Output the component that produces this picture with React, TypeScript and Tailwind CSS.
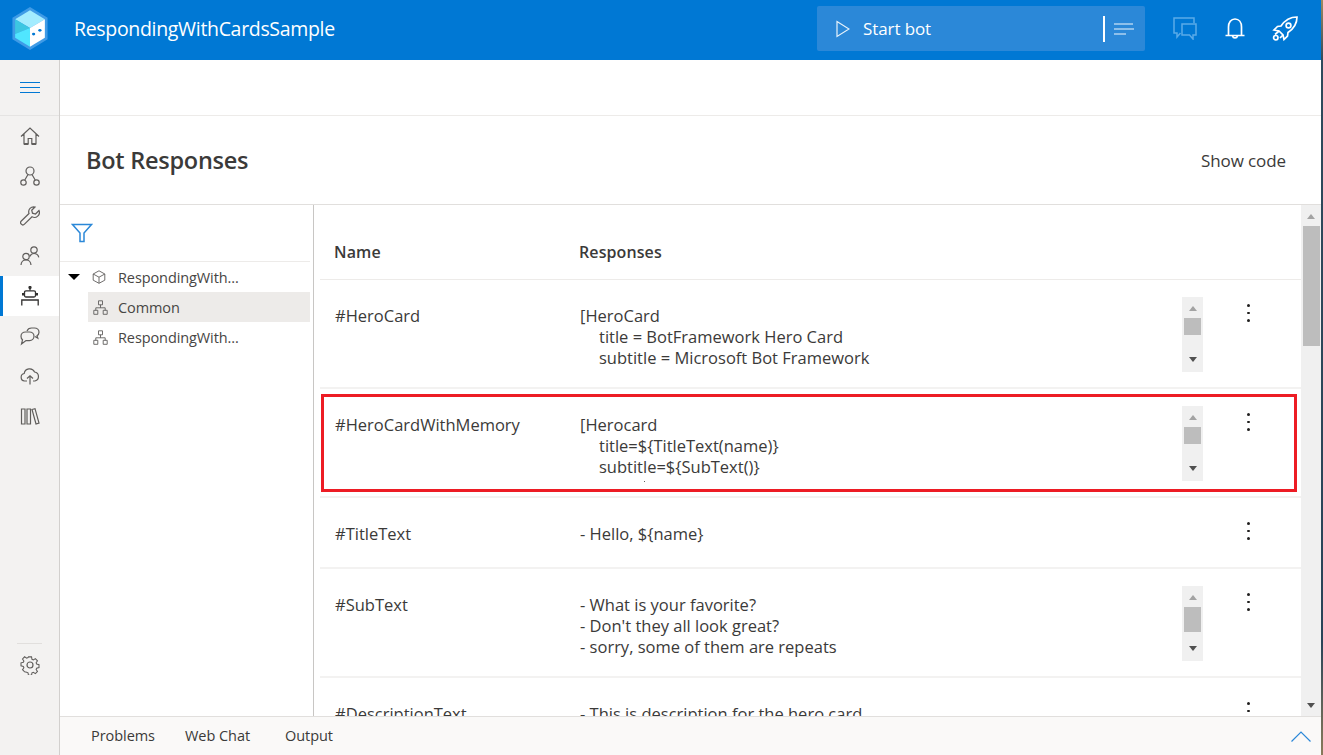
import type { ReactNode } from "react";

const navIcon = "fill-none stroke-[#605e5c] stroke-[1.2]";

function NavHome() {
  return (
    <svg width="20" height="20" viewBox="0 0 20 20" className={navIcon}>
      <path d="M1 10.500 10 2l9 8.500M4 8v10h4.200v-5.500h3.600V18H16V8" />
      <path d="M4 18h4.200M11.800 18H16" strokeWidth="2" />
    </svg>
  );
}
function NavDialog() {
  return (
    <svg width="20" height="20" viewBox="0 0 20 20" className={navIcon}>
      <circle cx="10" cy="5" r="4" />
      <circle cx="3.500" cy="16.500" r="2.700" />
      <circle cx="16.500" cy="16.500" r="2.700" />
      <path d="M8 8.500 4.800 14M12 8.500l3.200 5.500" />
    </svg>
  );
}
function NavWrench() {
  return (
    <svg width="20" height="20" viewBox="0 0 20 20" className={navIcon}>
      <path d="M19 4.500 15.500 8l-3-.8-.8-3L15 1a5 5 0 0 0-6 6.500L1.300 15a2.200 2.200 0 0 0 3.200 3.200L12 10.800A5 5 0 0 0 19 4.500Z" />
    </svg>
  );
}
function NavUsers() {
  return (
    <svg width="20" height="20" viewBox="0 0 20 20" className={navIcon}>
      <circle cx="14" cy="4" r="3.200" />
      <circle cx="6" cy="10.500" r="3.200" />
      <path d="M9.800 10.500c.8-2 2.300-3 4.200-3 2.500 0 4.200 1.500 4.800 3.800M1 19c.2-3 2.200-5 5-5s4.800 2 5 5" />
    </svg>
  );
}
function NavBot() {
  return (
    <svg width="20" height="20" viewBox="0 0 20 20" fill="none" stroke="#323130" strokeWidth="1.300">
      <circle cx="10" cy="1.500" r="1" fill="#323130" />
      <path d="M10 2.500v2" />
      <rect x="4.500" y="4.800" width="11" height="6.200" rx="1.500" />
      <path d="M3 7v2.500M17 7v2.500" strokeWidth="2" />
      <path d="M7.500 7.800h.01M12.500 7.800h.01" strokeWidth="2.200" />
      <path d="M1.800 19.500v-5.500h16.400v5.500" />
    </svg>
  );
}
function NavChat() {
  return (
    <svg width="20" height="20" viewBox="0 0 20 20" className={navIcon}>
      <path d="M7 5c.7-2 2.400-3 4.500-3h3C17 2 19 3.900 19 6.200c0 1.600-.8 2.800-2 3.600l.8 2.400-2.800-1.700" />
      <path d="M5.500 6h4C12 6 14 8 14 10.300s-2 4.300-4.500 4.300H6L1.500 18l1-4.200C1.500 13 1 11.700 1 10.300 1 8 3 6 5.500 6Z" />
    </svg>
  );
}
function NavCloud() {
  return (
    <svg width="20" height="20" viewBox="0 0 20 20" className={navIcon}>
      <path d="M7 15H4.500a3.800 3.800 0 0 1-.3-7.500A5.500 5.500 0 0 1 14.600 6 4.600 4.600 0 0 1 15 15h-2" />
      <path d="M10 18.500V10M7 12.500 10 9.800l3 2.700" />
    </svg>
  );
}
function NavBooks() {
  return (
    <svg width="20" height="20" viewBox="0 0 20 20" className={navIcon}>
      <path d="M1.500 3h3.500v15H1.500zM7 3h3.500v15H7zM12 3.500l3-.8 4 14.500-3 .8z" />
    </svg>
  );
}
function NavGear() {
  return (
    <svg width="20" height="20" viewBox="0 0 20 20" className={navIcon}>
      <circle cx="10" cy="10" r="3" />
      <path d="M8.300 1h3.400l.5 2.700 1.500.7 2.300-1.500 2.300 2.400-1.500 2.200.6 1.500 2.600.6v3.300l-2.600.6-.6 1.500 1.500 2.200-2.300 2.400-2.300-1.500-1.500.6-.5 2.700H8.300l-.5-2.700-1.500-.6L4 17.600l-2.300-2.400 1.500-2.200-.6-1.500L0 10.900V7.600l2.600-.6.600-1.500L1.700 3.300 4 .9l2.300 1.500 1.500-.7z" transform="translate(1 1) scale(.9)" />
    </svg>
  );
}

function Logo() {
  return (
    <svg width="36" height="43" viewBox="0 0 40 46" preserveAspectRatio="none">
      <path d="M20 0 39.500 11.500v23L20 46 .5 34.500v-23Z" fill="#3f9be6" />
      <path d="M20 3.500 36.500 13 20 22.500 3.500 13Z" fill="#a3ecff" />
      <path d="M3.500 13 20 22.500 3.500 29Z" fill="#3cc6e2" />
      <path d="M3.500 29 20 22.500V42.500L3.500 33Z" fill="#50e6ff" />
      <path d="M20 22.500 36.500 13v20L20 42.500Z" fill="#fff" />
      <ellipse cx="24" cy="29" rx="1.800" ry="1.400" fill="#0078d4" />
      <ellipse cx="31" cy="25" rx="1.800" ry="1.400" fill="#0078d4" />
    </svg>
  );
}

function Cube() {
  return (
    <svg width="14" height="14" viewBox="0 0 14 14" fill="none" stroke="#605e5c" strokeWidth="0.900">
      <path d="M7 .8 12.800 4v6.200L7 13.300 1.200 10.200V4ZM1.200 4 7 7.200 12.800 4M7 7.200v6" />
    </svg>
  );
}
function Tree() {
  return (
    <svg width="15" height="15" viewBox="0 0 15 15" fill="none" stroke="#605e5c" strokeWidth="0.900">
      <path d="M5.500.8h4v4h-4zM.8 10.300h4v4h-4zM10.200 10.300h4v4h-4zM7.500 4.800v3M2.800 10.300V7.800h9.400v2.500" />
    </svg>
  );
}

function TinyScrollbar({ tall }: { tall?: boolean }) {
  return (
    <div className="flex h-[75px] w-[21px] flex-col items-center bg-[#f0f0f0]">
      <div className="mt-[9px] h-0 w-0 border-x-[4.500px] border-b-[5px] border-x-transparent border-b-[#a3a3a3]" />
      <div className={`mt-[7px] w-[17px] bg-[#bdbdbd] ${tall ? "h-[25px]" : "h-[17px]"}`} />
      <div className="mt-auto mb-[10px] h-0 w-0 border-x-[4.500px] border-t-[5px] border-x-transparent border-t-[#505050]" />
    </div>
  );
}

function Dots() {
  return (
    <div className="flex flex-col gap-[5px]">
      <span className="h-[2.500px] w-[2.500px] rounded-full bg-[#201f1e]" />
      <span className="h-[2.500px] w-[2.500px] rounded-full bg-[#201f1e]" />
      <span className="h-[2.500px] w-[2.500px] rounded-full bg-[#201f1e]" />
    </div>
  );
}

function Row({
  name,
  lines,
  height,
  bar,
  tall,
  speck,
}: {
  name: string;
  lines: ReactNode;
  height: string;
  bar?: boolean;
  tall?: boolean;
  speck?: boolean;
}) {
  return (
    <div className={`relative flex shrink-0 border-b-2 border-[#f3f2f1] ${height}`}>
      <div className="w-[260px] shrink-0 pl-[15px] pt-[25px] leading-[21px]">{name}</div>
      <div className="w-[602px] shrink-0 pt-[25px] leading-[21px]">{lines}</div>
      <div className="w-[21px] shrink-0 pt-[17px]">{bar && <TinyScrollbar tall={tall} />}</div>
      <div className="ml-[44px] pt-[24px]">
        <Dots />
      </div>
      {/* top of the next line, clipped by the cell in the original */}
      {speck && <span className="absolute left-[324px] top-[92px] h-px w-px bg-[#605e5c]" />}
    </div>
  );
}

function Indented({ children }: { children: ReactNode }) {
  return <div className="pl-[19px]">{children}</div>;
}

const navItems = [NavHome, NavDialog, NavWrench, NavUsers, NavBot, NavChat, NavCloud, NavBooks];

export default function App() {
  return (
    <div className="flex h-[755px] w-[1323px] overflow-hidden font-['Open_Sans','Noto_Sans',sans-serif] text-[16.500px] tracking-[0px] text-[#3b3a39]">
      <div className="flex h-full w-[1321px] shrink-0 flex-col bg-white">
        <header className="flex h-[60px] shrink-0 items-center bg-[#0078d4]">
          <div className="ml-[12px] mb-[3px] flex">
            <Logo />
          </div>
          <h1 className="ml-[26px] mb-[2px] text-[19.500px] tracking-[-0.32px] text-white">RespondingWithCardsSample</h1>
          <div className="ml-auto mb-[3px] flex h-[45px] w-[328px] items-center rounded-[2px] bg-[#2b88d8]">
            <svg width="14" height="18" viewBox="0 0 14 18" fill="none" stroke="#e6f2fb" strokeWidth="1.200" className="ml-[19px]">
              <path d="M1 1.500 13 9 1 16.500Z" />
            </svg>
            <span className="ml-[13px] text-[17px] tracking-[-0.1px] text-white">Start bot</span>
            <span className="ml-auto h-[26px] w-[2px] bg-white" />
            <svg width="20" height="12" viewBox="0 0 20 12" stroke="#f0f7fd" strokeWidth="1" className="ml-[9px] mr-[11px]">
              <path d="M0 1h19M0 6h20M0 11h12" />
            </svg>
          </div>
          <svg width="24" height="23" viewBox="0 0 24 23" fill="none" stroke="#5aaae8" strokeWidth="1.500" className="ml-[28px] mb-[3px]">
            <path d="M21 6V1H1v15h3v4l3.500-4" />
            <path d="M9 7h14v11h-3v4l-3.500-4H9Z" />
          </svg>
          <svg width="20" height="22" viewBox="0 0 20 22" fill="none" stroke="#fff" strokeWidth="1.700" className="ml-[28px] mb-[3px]">
            <path d="M3.500 17V9c0-4.500 2.500-8 6.500-8s6.500 3.500 6.500 8v8M.5 17.500h19M7.500 18a2.600 2.600 0 0 0 5 0" />
          </svg>
          <svg width="26" height="25" viewBox="0 0 26 25" fill="none" stroke="#fff" strokeWidth="1.700" className="ml-[27px] mr-[23px] mb-[3px]">
            <path d="M25 1c-7 0-12 3-16 9l-3.500.5L2 14l5 1 4 4 1 4.500 3.500-3.500.5-3.500c6-4 9-9 9-15.500Z" />
            <circle cx="16.500" cy="9.500" r="2.400" />
            <circle cx="3.800" cy="21.700" r="2.200" />
            <path d="M7 15 3 18.500M11 19l-3 3" />
          </svg>
        </header>

        <div className="flex min-h-0 flex-1">
          <nav className="flex w-[60px] shrink-0 flex-col border-r border-[#d2d0ce] bg-[#f3f2f1]">
            <div className="flex h-[56px] shrink-0 items-start justify-center border-b border-[#e5e4e3] pt-[22px]">
              <svg width="20" height="11" viewBox="0 0 20 11" stroke="#0078d4" strokeWidth="1">
                <path d="M0 .5h20M0 5.500h20M0 10.500h20" />
              </svg>
            </div>
            {navItems.map((Icon, i) => (
              <div
                key={i}
                className={`flex h-[40px] shrink-0 items-center justify-center ${i === 4 ? "border-l-[3px] border-[#0078d4] bg-white pr-[3px]" : ""}`}
              >
                <Icon />
              </div>
            ))}
            <div className="mx-[17px] mt-auto mb-[11px] h-px bg-[#e1dfdd]" />
            <div className="mb-[80px] flex justify-center">
              <NavGear />
            </div>
          </nav>

          <main className="flex min-w-0 flex-1 flex-col">
            <div className="h-[56px] shrink-0 border-b border-[#edebe9]" />
            <div className="flex h-[89px] shrink-0 items-center justify-between border-b border-[#e1dfdd] pl-[26px] pr-[35px] pt-[2px]">
              <h2 className="text-[23.500px] font-semibold tracking-[-0.25px]">Bot Responses</h2>
              <span className="text-[17px] tracking-[-0.1px]">Show code</span>
            </div>

            <div className="relative flex min-h-0 flex-1">
              <aside className="w-[254px] shrink-0 border-r border-[#c8c6c4] pr-[3px] text-[14.500px] tracking-[-0.1px] text-[#484644]">
                <div className="flex h-[57px] items-center border-b border-[#edebe9] pl-[11px]">
                  <svg width="22" height="20" viewBox="0 0 22 20" fill="none" stroke="#2b88d8" strokeWidth="1.500">
                    <path d="M1.500 1.500h19L13 10v8.500H9V10Z" />
                  </svg>
                </div>
                <div className="flex h-[30px] items-center">
                  <span className="ml-[8px] h-0 w-0 border-x-[6.500px] border-t-[6px] border-x-transparent border-t-black" />
                  <span className="ml-[12px] flex">
                    <Cube />
                  </span>
                  <span className="ml-[12px] pt-[2px]">RespondingWith...</span>
                </div>
                <div className="ml-[28px] flex h-[30px] items-center bg-[#edebe9] pl-[5px]">
                  <Tree />
                  <span className="ml-[10px] pt-[2px]">Common</span>
                </div>
                <div className="ml-[28px] flex h-[30px] items-center pl-[5px]">
                  <Tree />
                  <span className="ml-[10px] pt-[2px]">RespondingWith...</span>
                </div>
              </aside>

              <section className="relative min-w-0 flex-1 overflow-hidden">
                <div className="ml-[6px] flex h-full w-[981px] flex-col">
                  <div className="flex h-[75px] shrink-0 items-end border-b border-[#edebe9] pb-[15px] text-[16px] font-semibold tracking-[0.1px]">
                    <div className="w-[259px] shrink-0 pl-[14px]">Name</div>
                    <div>Responses</div>
                  </div>
                  <Row
                    name="#HeroCard"
                    height="h-[109px]"
                    bar
                    lines={
                      <>
                        <div>[HeroCard</div>
                        <Indented>title = BotFramework Hero Card</Indented>
                        <Indented>subtitle = Microsoft Bot Framework</Indented>
                      </>
                    }
                  />
                  <Row
                    name="#HeroCardWithMemory"
                    height="h-[109px]"
                    bar
                    speck
                    lines={
                      <>
                        <div>[Herocard</div>
                        <Indented>title=${"{"}TitleText(name){"}"}</Indented>
                        <Indented>subtitle=${"{"}SubText(){"}"}</Indented>
                      </>
                    }
                  />
                  <Row name="#TitleText" height="h-[71px]" lines={<div>- Hello, ${"{"}name{"}"}</div>} />
                  <Row
                    name="#SubText"
                    height="h-[109px]"
                    bar
                    tall
                    lines={
                      <>
                        <div>- What is your favorite?</div>
                        <div>- Don't they all look great?</div>
                        <div>- sorry, some of them are repeats</div>
                      </>
                    }
                  />
                  <Row name="#DescriptionText" height="h-[109px]" lines={<div>- This is description for the hero card</div>} />
                </div>

                {/* page scrollbar */}
                <div className="absolute inset-y-0 right-0 flex w-[20px] flex-col items-center bg-[#f0f0f0]">
                  <div className="mt-[9px] h-0 w-0 border-x-[4.500px] border-b-[5px] border-x-transparent border-b-[#a3a3a3]" />
                  <div className="mt-[7px] h-[120px] w-[17px] bg-[#bdbdbd]" />
                  <div className="mt-auto mb-[8px] h-0 w-0 border-x-[4.500px] border-t-[5px] border-x-transparent border-t-[#505050]" />
                </div>

                {/* red highlight drawn over the row */}
                <div className="pointer-events-none absolute left-[7px] top-[189px] h-[98px] w-[976px] border-[3px] border-[#ed1c24]" />
              </section>
            </div>

            <footer className="flex h-[39px] shrink-0 items-center border-t border-[#e1dfdd] bg-[#faf9f8] text-[14.500px] tracking-[-0.05px]">
              <span className="ml-[31px]">Problems</span>
              <span className="ml-[30px]">Web Chat</span>
              <span className="ml-[35px]">Output</span>
              <svg width="20" height="11" viewBox="0 0 20 11" fill="none" stroke="#2b88d8" strokeWidth="1.200" className="ml-auto mr-[10px]">
                <path d="M.5 10.500 10 1l9.500 9.500" />
              </svg>
            </footer>
          </main>
        </div>
      </div>
      {/* desktop wallpaper showing behind the window edge */}
      <div className="h-full w-[2px] shrink-0 bg-[linear-gradient(to_bottom,#a08a60_0%,#2f4a5c_8%,#2a4458_85%,#8a7a5a_100%)]" />
    </div>
  );
}
